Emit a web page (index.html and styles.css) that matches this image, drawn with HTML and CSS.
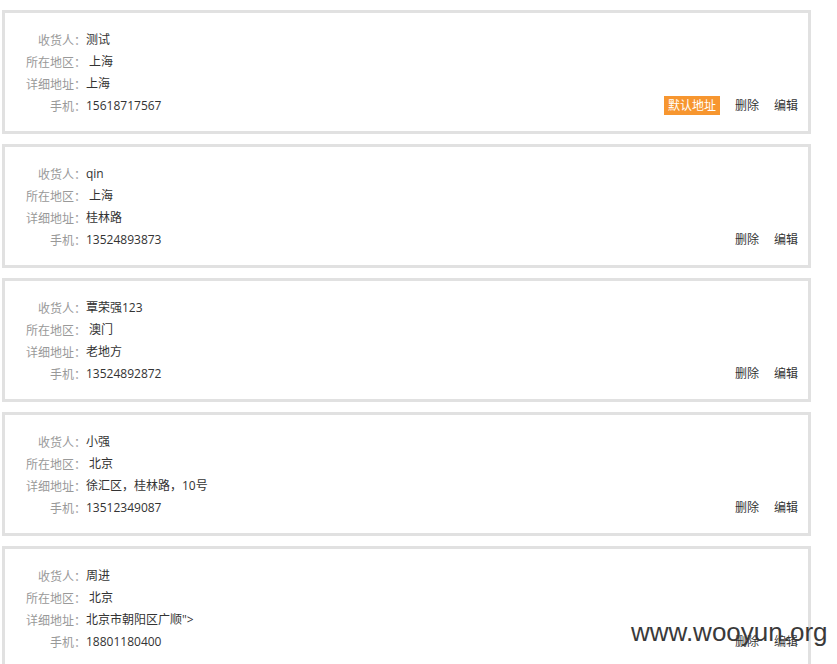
FILE: index.html
```html
<!DOCTYPE html>
<html lang="zh-CN">
<head>
<meta charset="utf-8">
<title>收货地址</title>
<link rel="stylesheet" href="styles.css">
</head>
<body>
<div class="list">
  <div class="card">
    <div class="info">
      <div class="row"><span class="label">收货人<i class="colon">：</i></span><span class="value">测试</span></div>
      <div class="row"><span class="label">所在地区<i class="colon">：</i></span><span class="value">&nbsp;上海</span></div>
      <div class="row"><span class="label">详细地址<i class="colon">：</i></span><span class="value">上海</span></div>
      <div class="row"><span class="label">手机<i class="colon">：</i></span><span class="value">15618717567</span></div>
    </div>
    <div class="actions"><span class="default">默认地址</span><a class="op">删除</a><a class="op">编辑</a></div>
  </div>
  <div class="card">
    <div class="info">
      <div class="row"><span class="label">收货人<i class="colon">：</i></span><span class="value">qin</span></div>
      <div class="row"><span class="label">所在地区<i class="colon">：</i></span><span class="value">&nbsp;上海</span></div>
      <div class="row"><span class="label">详细地址<i class="colon">：</i></span><span class="value">桂林路</span></div>
      <div class="row"><span class="label">手机<i class="colon">：</i></span><span class="value">13524893873</span></div>
    </div>
    <div class="actions"><a class="op">删除</a><a class="op">编辑</a></div>
  </div>
  <div class="card">
    <div class="info">
      <div class="row"><span class="label">收货人<i class="colon">：</i></span><span class="value">覃荣强123</span></div>
      <div class="row"><span class="label">所在地区<i class="colon">：</i></span><span class="value">&nbsp;澳门</span></div>
      <div class="row"><span class="label">详细地址<i class="colon">：</i></span><span class="value">老地方</span></div>
      <div class="row"><span class="label">手机<i class="colon">：</i></span><span class="value">13524892872</span></div>
    </div>
    <div class="actions"><a class="op">删除</a><a class="op">编辑</a></div>
  </div>
  <div class="card">
    <div class="info">
      <div class="row"><span class="label">收货人<i class="colon">：</i></span><span class="value">小强</span></div>
      <div class="row"><span class="label">所在地区<i class="colon">：</i></span><span class="value">&nbsp;北京</span></div>
      <div class="row"><span class="label">详细地址<i class="colon">：</i></span><span class="value">徐汇区，桂林路，10号</span></div>
      <div class="row"><span class="label">手机<i class="colon">：</i></span><span class="value">13512349087</span></div>
    </div>
    <div class="actions"><a class="op">删除</a><a class="op">编辑</a></div>
  </div>
  <div class="card">
    <div class="info">
      <div class="row"><span class="label">收货人<i class="colon">：</i></span><span class="value">周进</span></div>
      <div class="row"><span class="label">所在地区<i class="colon">：</i></span><span class="value">&nbsp;北京</span></div>
      <div class="row"><span class="label">详细地址<i class="colon">：</i></span><span class="value">北京市朝阳区广顺"&gt;</span></div>
      <div class="row"><span class="label">手机<i class="colon">：</i></span><span class="value">18801180400</span></div>
    </div>
    <div class="actions"><a class="op">删除</a><a class="op">编辑</a></div>
  </div>
</div>
<div class="watermark">www.wooyun.org</div>
</body>
</html>
```

FILE: styles.css
```css
html, body {
  margin: 0;
  padding: 0;
  background: #fff;
  overflow: hidden;
}
body {
  font-family: "Open Sans", "Noto Sans CJK SC", sans-serif;
  font-size: 12px;
  color: #333;
  width: 837px;
  height: 664px;
  position: relative;
}
.list {
  display: flex;
  flex-direction: column;
  gap: 10px;
  padding: 10px 0 0 2px;
}
.card {
  width: 803px;
  height: 118px;
  border: 3px solid #e1e1e1;
  display: flex;
  justify-content: space-between;
  align-items: flex-end;
  box-sizing: content-box;
}
.info {
  padding: 16px 0 14px 0;
}
.row {
  display: flex;
  height: 22px;
  line-height: 22px;
}
.label {
  width: 81px;
  text-align: right;
  color: #999;
  flex-shrink: 0;
}
.colon {
  font-style: normal;
  font-family: "Noto Sans CJK JP", sans-serif;
}
.value {
  color: #333;
  white-space: pre;
}
.actions {
  display: flex;
  align-items: center;
  gap: 15px;
  padding: 0 10px 16px 0;
  height: 19px;
}
.default {
  background: #f7962f;
  color: #fff;
  width: 56px;
  height: 19px;
  line-height: 19px;
  text-align: center;
}
.op {
  color: #333;
  line-height: 19px;
}
.watermark {
  position: absolute;
  left: 631px;
  top: 617px;
  font-family: "Liberation Sans", Arial, sans-serif;
  font-size: 26px;
  line-height: 30px;
  color: #3a3a3a;
  white-space: nowrap;
}
```
